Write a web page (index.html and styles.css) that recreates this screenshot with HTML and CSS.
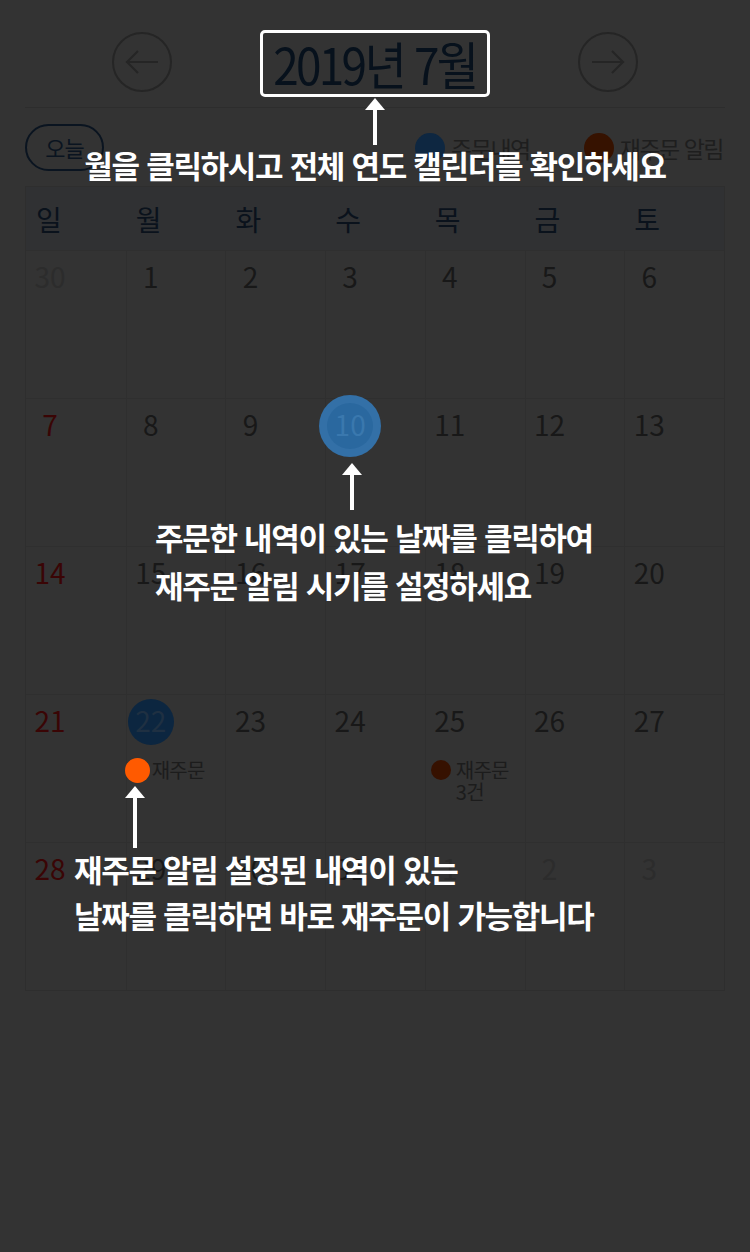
FILE: index.html
```html
<!DOCTYPE html>
<html lang="ko">
<head>
<meta charset="utf-8">
<title>재주문 캘린더</title>
<link rel="stylesheet" href="styles.css">
</head>
<body>
<div class="page">
  <header class="month-nav">
    <button class="nav-btn" aria-label="이전 달">
      <svg width="60" height="60" viewBox="0 0 60 60"><circle cx="30" cy="30" r="29" fill="none" stroke="#252525" stroke-width="2"/><path d="M46 30H15M26 19L15 30L26 41" fill="none" stroke="#252525" stroke-width="2.2"/></svg>
    </button>
    <h1 class="month-title"><span class="month-label">2019년 7월</span></h1>
    <button class="nav-btn" aria-label="다음 달">
      <svg width="60" height="60" viewBox="0 0 60 60"><circle cx="30" cy="30" r="29" fill="none" stroke="#252525" stroke-width="2"/><path d="M14 30H45M34 19L45 30L34 41" fill="none" stroke="#252525" stroke-width="2.2"/></svg>
    </button>
  </header>

  <div class="toolbar">
    <button class="today-btn">오늘</button>
    <ul class="legend">
      <li><span class="dot dot-order"></span>주문내역</li>
      <li><span class="dot dot-reorder"></span>재주문 알림</li>
    </ul>
  </div>

  <div class="calendar">
    <div class="weekdays">
      <div>일</div><div>월</div><div>화</div><div>수</div><div>목</div><div>금</div><div>토</div>
    </div>
    <div class="days">
      <div class="day"><div class="num other">30</div></div>
      <div class="day"><div class="num">1</div></div>
      <div class="day"><div class="num">2</div></div>
      <div class="day"><div class="num">3</div></div>
      <div class="day"><div class="num">4</div></div>
      <div class="day"><div class="num">5</div></div>
      <div class="day"><div class="num">6</div></div>

      <div class="day"><div class="num sun">7</div></div>
      <div class="day"><div class="num">8</div></div>
      <div class="day"><div class="num">9</div></div>
      <div class="day"><div class="num spot">10</div></div>
      <div class="day"><div class="num">11</div></div>
      <div class="day"><div class="num">12</div></div>
      <div class="day"><div class="num">13</div></div>

      <div class="day"><div class="num sun">14</div></div>
      <div class="day"><div class="num">15</div></div>
      <div class="day"><div class="num">16</div></div>
      <div class="day"><div class="num">17</div></div>
      <div class="day"><div class="num">18</div></div>
      <div class="day"><div class="num">19</div></div>
      <div class="day"><div class="num">20</div></div>

      <div class="day"><div class="num sun">21</div></div>
      <div class="day">
        <div class="num ordered">22</div>
        <div class="event"><span class="event-dot spot"></span><span class="event-text">재주문</span></div>
      </div>
      <div class="day"><div class="num">23</div></div>
      <div class="day"><div class="num">24</div></div>
      <div class="day">
        <div class="num">25</div>
        <div class="event"><span class="event-dot"></span><span class="event-text">재주문<br>3건</span></div>
      </div>
      <div class="day"><div class="num">26</div></div>
      <div class="day"><div class="num">27</div></div>

      <div class="day"><div class="num sun">28</div></div>
      <div class="day"><div class="num">29</div></div>
      <div class="day"><div class="num">30</div></div>
      <div class="day"><div class="num">31</div></div>
      <div class="day"><div class="num other">1</div></div>
      <div class="day"><div class="num other">2</div></div>
      <div class="day"><div class="num other">3</div></div>
    </div>
  </div>

  <div class="coach coach-month">
    <svg class="arrow" width="20" height="47" viewBox="0 0 20 47"><polygon points="10,0 20,12 0,12" fill="#fff"/><rect x="8" y="11" width="4" height="36" fill="#fff"/></svg>
    <p class="coach-text">월을 클릭하시고 전체 연도 캘린더를 확인하세요</p>
  </div>

  <div class="coach coach-day">
    <svg class="arrow" width="20" height="47" viewBox="0 0 20 47"><polygon points="10,0 20,12 0,12" fill="#fff"/><rect x="8" y="11" width="4" height="36" fill="#fff"/></svg>
    <p class="coach-text">주문한 내역이 있는 날짜를 클릭하여<br>재주문 알림 시기를 설정하세요</p>
  </div>

  <div class="coach coach-reorder">
    <svg class="arrow" width="20" height="62" viewBox="0 0 20 62"><polygon points="10,0 20,12 0,12" fill="#fff"/><rect x="8" y="11" width="4" height="51" fill="#fff"/></svg>
    <p class="coach-text">재주문 알림 설정된 내역이 있는<br>날짜를 클릭하면 바로 재주문이 가능합니다</p>
  </div>
</div>
</body>
</html>
```

FILE: styles.css
```css
* { box-sizing: border-box; }

body {
  margin: 0;
  background: #333333;
  font-family: "Noto Sans CJK KR", "Noto Sans", sans-serif;
}

.page {
  position: relative;
  width: 750px;
  height: 1252px;
}

/* month navigation */
.month-nav {
  display: flex;
  justify-content: center;
  align-items: flex-start;
  gap: 88px;
  height: 108px;
  margin: 0 25px;
  padding-top: 30px;
  border-bottom: 1px solid #2d2d2d;
}

.nav-btn {
  width: 60px;
  height: 60px;
  margin-top: 2px;
  padding: 0;
  border: 0;
  background: none;
}
.nav-btn svg { display: block; }

.month-title {
  flex: none;
  margin: 0;
  width: 230px;
  height: 67px;
  border: 3px solid #ffffff;
  border-radius: 5px;
  display: flex;
  align-items: center;
  justify-content: center;
  font-size: 51px;
  font-weight: 400;
  color: #07111c;
  white-space: nowrap;
}
.month-label {
  flex: none;
  display: inline-block;
  letter-spacing: -3px;
  transform: scaleX(0.9);
  margin-top: -2px;
  white-space: nowrap;
}

/* toolbar */
.toolbar {
  display: flex;
  justify-content: space-between;
  align-items: center;
  margin: 0 25px;
  padding: 16px 0 15px;
}

.today-btn {
  width: 79px;
  height: 47px;
  border: 2px solid #0a1420;
  border-radius: 24px;
  background: none;
  font-family: inherit;
  font-size: 22px;
  color: #0a1420;
  padding: 0 0 2px;
  letter-spacing: -1px;
}

.legend {
  display: flex;
  gap: 54px;
  margin: 0 2px 0 0;
  padding: 0;
  list-style: none;
}
.legend li {
  display: flex;
  align-items: center;
  gap: 6px;
  font-size: 23px;
  letter-spacing: -1.5px;
  color: #1e1e1e;
}
.dot {
  width: 30px;
  height: 30px;
  border-radius: 50%;
}
.dot-order { background: #0e2741; }
.dot-reorder { background: #361200; }

/* calendar */
.calendar {
  margin: 0 25px;
  border: 1px solid #2e2e2e;
}

.weekdays {
  display: grid;
  grid-template-columns: repeat(7, 1fr);
  align-items: center;
  height: 63px;
  background: #303133;
}
.weekdays div {
  padding-left: 10px;
  font-size: 28px;
  color: #0a121c;
}

.days {
  display: grid;
  grid-template-columns: repeat(7, 1fr);
}
.day {
  height: 148px;
  border-top: 1px solid #2f2f2f;
  border-left: 1px solid #2f2f2f;
}
.day:nth-child(7n+1) { border-left: 0; }

.num {
  width: 46px;
  height: 46px;
  margin: 4px 0 0 1px;
  border-radius: 50%;
  display: flex;
  align-items: center;
  justify-content: center;
  font-size: 28px;
  line-height: 1;
  padding-bottom: 4px;
  color: #181818;
}
.num.other { color: #2c2c2c; }
.num.sun { color: #3a0505; }
.num.ordered {
  background: #0c2640;
  color: #1f3042;
}
.num.spot {
  background: #2a689f;
  color: #3a78ae;
  box-shadow: 0 0 0 8px #3370a7;
}

.event {
  display: flex;
  align-items: flex-start;
  gap: 5px;
  margin: 14px 0 0 5px;
}
.event-dot {
  flex: none;
  width: 20px;
  height: 20px;
  margin-top: 1px;
  border-radius: 50%;
  background: #361100;
}
.event-dot.spot {
  width: 25px;
  height: 25px;
  margin: -1px -3px -4px -7px;
  background: #ff5a00;
}
.event-text {
  font-size: 20px;
  line-height: 22px;
  letter-spacing: -0.8px;
  color: #1c1c1c;
}

/* coach marks (overlay) */
.coach {
  position: absolute;
  color: #ffffff;
}
.coach .arrow { display: block; }
.coach-text {
  margin: 0;
  font-size: 31px;
  font-weight: 700;
  letter-spacing: -1.3px;
  white-space: nowrap;
}

.coach-month {
  top: 98px;
  left: 0;
  width: 750px;
  display: flex;
  flex-direction: column;
  align-items: center;
}
.coach-month .coach-text {
  line-height: 40px;
}

.coach-day {
  top: 463px;
  left: 155px;
}
.coach-day .arrow { margin-left: 187px; }
.coach-day .coach-text {
  margin-top: 3px;
  line-height: 48px;
}

.coach-reorder {
  top: 786px;
  left: 74px;
}
.coach-reorder .arrow { margin-left: 51px; }
.coach-reorder .coach-text {
  margin-top: -2px;
  line-height: 46px;
}
```
